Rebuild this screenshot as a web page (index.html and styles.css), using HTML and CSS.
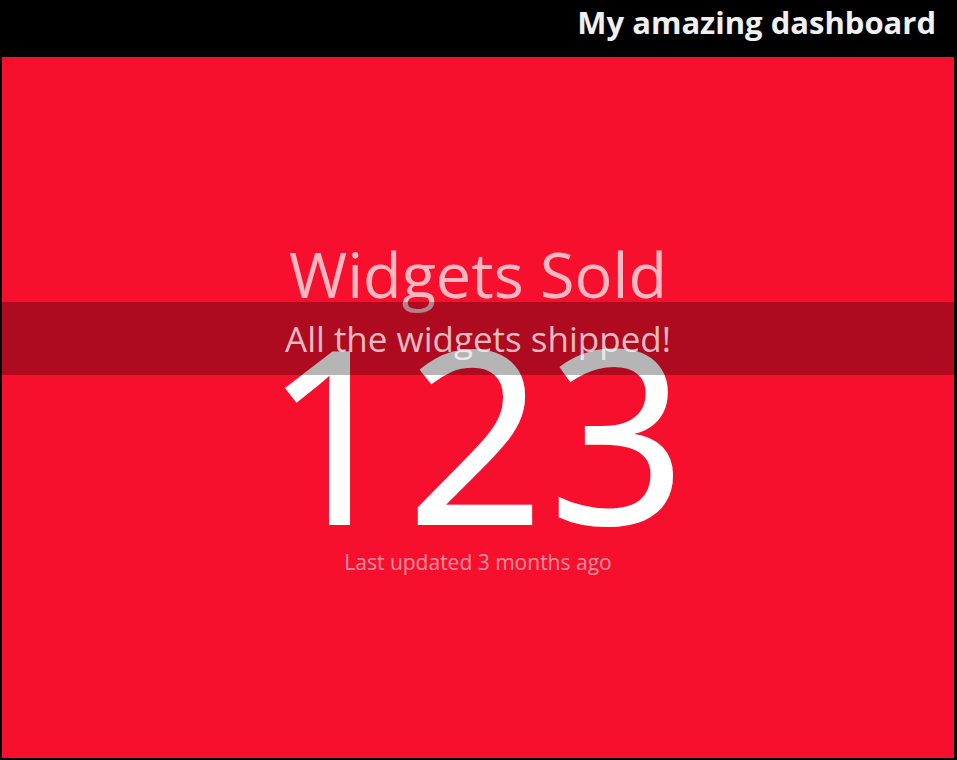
FILE: index.html
```html
<!DOCTYPE html>
<html>
<head>
<meta charset="utf-8">
<link rel="stylesheet" href="styles.css">
</head>
<body>
<header class="topbar">
  <h2 class="dash-title">My amazing dashboard</h2>
</header>
<main class="widget">
  <h1 class="widget-title">Widgets Sold</h1>
  <p class="widget-value">123</p>
  <p class="widget-updated">Last updated 3 months ago</p>
  <div class="widget-band">
    <p class="widget-moreinfo">All the widgets shipped!</p>
  </div>
</main>
</body>
</html>
```
FILE: styles.css
```css
html, body {
  margin: 0;
  padding: 0;
  background: #000;
  font-family: "Open Sans", "DejaVu Sans", sans-serif;
}
body {
  width: 957px;
  height: 760px;
  display: flex;
  flex-direction: column;
  overflow: hidden;
}
.topbar {
  height: 57px;
  box-sizing: border-box;
  display: flex;
  justify-content: flex-end;
  padding: 7px 21px 0 0;
}
.dash-title {
  margin: 0;
  font-size: 31px;
  font-weight: 700;
  line-height: 1;
  color: #eef0f2;
}
.widget {
  position: relative;
  flex: 1;
  margin: 0 3px 2px 2px;
  background: #f6102e;
  display: flex;
  flex-direction: column;
  align-items: center;
  justify-content: center;
}
.widget-title {
  margin: 0 0 0;
  font-size: 63px;
  font-weight: 400;
  line-height: 1;
  color: rgba(255, 255, 255, 0.7);
}
.widget-value {
  margin: 6px 0 0;
  font-size: 240px;
  font-weight: 400;
  line-height: 1;
  letter-spacing: 5px;
  -webkit-text-stroke: 2px #fff;
  color: #fff;
}
.widget-updated {
  margin: 1px 0 0;
  font-size: 21px;
  line-height: 1;
  color: rgba(255, 255, 255, 0.55);
}
.widget-band {
  position: absolute;
  left: 0;
  right: 0;
  top: 245px;
  height: 73px;
  background: rgba(0, 0, 0, 0.29);
  display: flex;
  align-items: center;
  justify-content: center;
}
.widget-moreinfo {
  margin: 0;
  font-size: 35px;
  line-height: 1;
  color: rgba(255, 255, 255, 0.72);
}
```
